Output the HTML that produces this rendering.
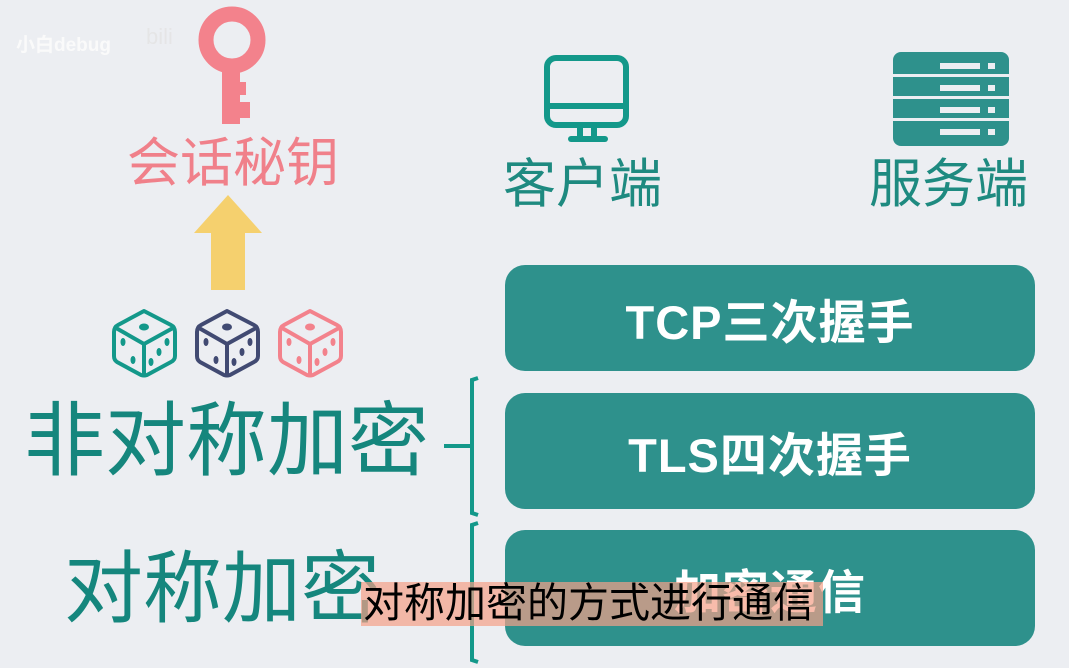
<!DOCTYPE html>
<html><head><meta charset="utf-8"><style>
html,body{margin:0;padding:0}
body{width:1069px;height:668px;background:#eceef2;position:relative;overflow:hidden;font-family:"Liberation Sans","Noto Sans CJK SC",sans-serif}
.t{position:absolute;white-space:nowrap;line-height:1}
.box{position:absolute;left:505px;width:530px;background:#2e918c;border-radius:20px;color:#fff;font-weight:bold;font-size:47px;display:flex;align-items:center;justify-content:center;letter-spacing:1px}
</style></head><body>
<div class="t" style="left:16px;top:36px;font-size:19px;font-weight:bold;color:#fafafa">小白debug</div>
<div class="t" style="left:146px;top:26px;font-size:22px;color:#e4e4e4;opacity:.8">bili</div>

<svg style="position:absolute;left:0;top:0" width="1069" height="668">
 <circle cx="232" cy="40" r="26" fill="none" stroke="#f3828c" stroke-width="15"/>
 <rect x="222" y="62" width="18" height="62" fill="#f3828c"/>
 <rect x="238" y="82" width="8" height="13" fill="#f3828c"/>
 <rect x="238" y="102" width="12" height="16" fill="#f3828c"/>
 <polygon points="228,195 262,233 245,233 245,290 211,290 211,233 194,233" fill="#f5d06e"/>
 <g fill="none" stroke-width="4" stroke-linejoin="round">
  <g stroke="#13988a" transform="translate(113,309)">
   <path d="M31 2 L58 16 Q62 18 62 23 L62 47 Q62 51 58 53 L34 66 Q31 67 28 66 L4 53 Q1 51 1 47 L1 23 Q1 18 5 16 Z"/>
   <path d="M3 19 L31 35 L60 19 M31 35 L31 66"/>
  </g>
  <g stroke="#414a72" transform="translate(196,309)">
   <path d="M31 2 L58 16 Q62 18 62 23 L62 47 Q62 51 58 53 L34 66 Q31 67 28 66 L4 53 Q1 51 1 47 L1 23 Q1 18 5 16 Z"/>
   <path d="M3 19 L31 35 L60 19 M31 35 L31 66"/>
  </g>
  <g stroke="#f3828c" transform="translate(279,309)">
   <path d="M31 2 L58 16 Q62 18 62 23 L62 47 Q62 51 58 53 L34 66 Q31 67 28 66 L4 53 Q1 51 1 47 L1 23 Q1 18 5 16 Z"/>
   <path d="M3 19 L31 35 L60 19 M31 35 L31 66"/>
  </g>
 </g>
 <g fill="#13988a" transform="translate(113,309)"><ellipse cx="31" cy="18" rx="5" ry="3.5"/><ellipse cx="10" cy="33" rx="2.5" ry="4"/><ellipse cx="20" cy="51" rx="2.5" ry="4"/><ellipse cx="54" cy="33" rx="2.5" ry="4"/><ellipse cx="46" cy="43" rx="2.5" ry="4"/><ellipse cx="38" cy="53" rx="2.5" ry="4"/></g>
 <g fill="#414a72" transform="translate(196,309)"><ellipse cx="31" cy="18" rx="5" ry="3.5"/><ellipse cx="10" cy="33" rx="2.5" ry="4"/><ellipse cx="20" cy="51" rx="2.5" ry="4"/><ellipse cx="54" cy="33" rx="2.5" ry="4"/><ellipse cx="46" cy="43" rx="2.5" ry="4"/><ellipse cx="38" cy="53" rx="2.5" ry="4"/></g>
 <g fill="#f3828c" transform="translate(279,309)"><ellipse cx="31" cy="18" rx="5" ry="3.5"/><ellipse cx="10" cy="33" rx="2.5" ry="4"/><ellipse cx="20" cy="51" rx="2.5" ry="4"/><ellipse cx="54" cy="33" rx="2.5" ry="4"/><ellipse cx="46" cy="43" rx="2.5" ry="4"/><ellipse cx="38" cy="53" rx="2.5" ry="4"/></g>
 <g fill="none" stroke="#13988a" stroke-width="6" stroke-linejoin="round" stroke-linecap="round">
  <rect x="547" y="58" width="79" height="67" rx="9"/>
  <line x1="547" y1="106" x2="626" y2="106"/>
  <line x1="580" y1="126" x2="580" y2="138"/><line x1="594" y1="126" x2="594" y2="138"/>
  <line x1="571" y1="139" x2="605" y2="139"/>
 </g>
 <rect x="893" y="52" width="116" height="94" rx="8" fill="#2e918c"/>
 <g fill="#eceef2">
  <rect x="893" y="74" width="116" height="3"/><rect x="893" y="96" width="116" height="3"/><rect x="893" y="118" width="116" height="3"/>
  <rect x="940" y="63" width="40" height="6"/><rect x="988" y="63" width="7" height="6"/>
  <rect x="940" y="85" width="40" height="6"/><rect x="988" y="85" width="7" height="6"/>
  <rect x="940" y="107" width="40" height="6"/><rect x="988" y="107" width="7" height="6"/>
  <rect x="940" y="129" width="40" height="6"/><rect x="988" y="129" width="7" height="6"/>
 </g>
 <g fill="none" stroke="#13988a" stroke-width="4">
  <path d="M478 378 L472 380 L472 513 L478 515"/>
  <path d="M478 523 L472 525 L472 660 L478 662"/>
  <line x1="444" y1="446" x2="472" y2="446"/>
 </g>
</svg>

<div class="t" style="left:127px;top:137px;font-size:53px;color:#f0808a">会话秘钥</div>
<div class="t" style="left:503px;top:158px;font-size:53px;color:#1e8a80">客户端</div>
<div class="t" style="left:869px;top:158px;font-size:53px;color:#1e8a80">服务端</div>
<div class="t" style="left:24px;top:402px;font-size:81px;color:#15867d">非对称加密</div>
<div class="t" style="left:64px;top:549px;font-size:79px;color:#15867d">对称加密</div>

<div class="box" style="top:265px;height:106px">TCP三次握手</div>
<div class="box" style="top:393px;height:116px">TLS四次握手</div>
<div class="box" style="top:530px;height:116px">加密通信</div>

<div class="t" style="left:361px;top:582px;width:462px;height:44px;background:rgba(245,160,135,.7);"></div>
<div class="t" style="left:363px;top:583px;font-size:41px;color:#000">对称加密的方式进行通信</div>
</body></html>
